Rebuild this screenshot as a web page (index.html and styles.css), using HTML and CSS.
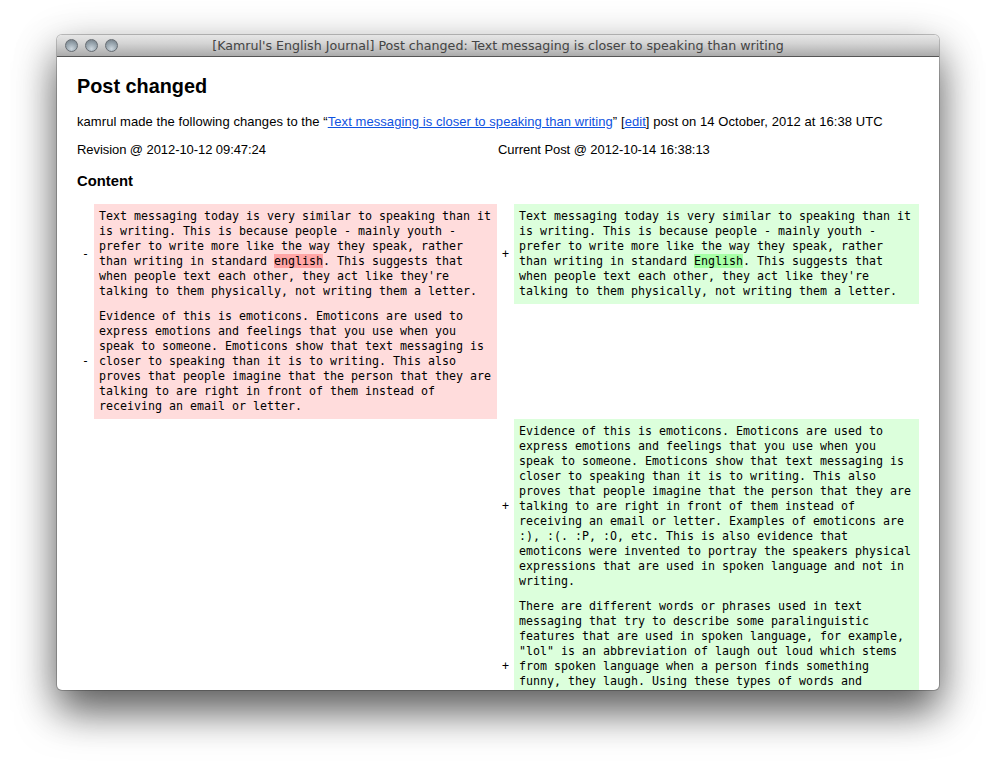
FILE: index.html
```
<!DOCTYPE html>
<html lang="en">
<head>
<meta charset="utf-8">
<title>Post changed</title>
<link rel="stylesheet" href="styles.css">
</head>
<body>
<div class="window">
  <header class="titlebar">
    <div class="lights"><span class="light"></span><span class="light"></span><span class="light"></span></div>
    <div class="title">[Kamrul's English Journal] Post changed: Text messaging is closer to speaking than writing</div>
  </header>
  <main class="content">
    <h1 class="heading">Post changed</h1>
    <p class="summary">kamrul made the following changes to the “<a href="#">Text messaging is closer to speaking than writing</a>” [<a href="#">edit</a>] post on 14 October, 2012 at 16:38 UTC</p>
    <div class="revisions"><div>Revision @ 2012-10-12 09:47:24</div><div>Current Post @ 2012-10-14 16:38:13</div></div>
    <h2 class="section">Content</h2>
    <div class="diff">
      <div class="marker">-</div>
      <div class="cell del">Text messaging today is very similar to speaking than it<br>is writing. This is because people - mainly youth -<br>prefer to write more like the way they speak, rather<br>than writing in standard <span class="hl-del">english</span>. This suggests that<br>when people text each other, they act like they're<br>talking to them physically, not writing them a letter.</div>
      <div class="marker">+</div>
      <div class="cell add">Text messaging today is very similar to speaking than it<br>is writing. This is because people - mainly youth -<br>prefer to write more like the way they speak, rather<br>than writing in standard <span class="hl-add">English</span>. This suggests that<br>when people text each other, they act like they're<br>talking to them physically, not writing them a letter.</div>

      <div class="marker">-</div>
      <div class="cell del">Evidence of this is emoticons. Emoticons are used to<br>express emotions and feelings that you use when you<br>speak to someone. Emoticons show that text messaging is<br>closer to speaking than it is to writing. This also<br>proves that people imagine that the person that they are<br>talking to are right in front of them instead of<br>receiving an email or letter.</div>
      <div class="marker"></div>
      <div class="cell"></div>

      <div class="marker"></div>
      <div class="cell"></div>
      <div class="marker">+</div>
      <div class="cell add">Evidence of this is emoticons. Emoticons are used to<br>express emotions and feelings that you use when you<br>speak to someone. Emoticons show that text messaging is<br>closer to speaking than it is to writing. This also<br>proves that people imagine that the person that they are<br>talking to are right in front of them instead of<br>receiving an email or letter. Examples of emoticons are<br>:), :(. :P, :O, etc. This is also evidence that<br>emoticons were invented to portray the speakers physical<br>expressions that are used in spoken language and not in<br>writing.</div>

      <div class="marker"></div>
      <div class="cell"></div>
      <div class="marker">+</div>
      <div class="cell add cut">There are different words or phrases used in text<br>messaging that try to describe some paralinguistic<br>features that are used in spoken language, for example,<br>"lol" is an abbreviation of laugh out loud which stems<br>from spoken language when a person finds something<br>funny, they laugh. Using these types of words and</div>
    </div>
  </main>
</div>
</body>
</html>
```
FILE: styles.css
```
html, body { margin: 0; height: 100%; background: #fff; overflow: hidden; }
body { padding: 35px 57px 0; box-sizing: border-box; width: 996px; height: 769px; }
.window {
  width: 882px; height: 655px; border-radius: 5px; overflow: hidden; background: #fff;
  box-shadow: 0 24px 40px -2px rgba(0,0,0,.5), 0 12px 44px rgba(0,0,0,.3), 0 0 0 1px rgba(0,0,0,.22);
  display: flex; flex-direction: column;
}
.titlebar {
  height: 21px; flex: none; position: relative; display: flex; align-items: center; justify-content: center;
  background: linear-gradient(#e6e6e6, #d4d4d4 40%, #ababab);
  border-bottom: 1px solid #555;
}
.lights { position: absolute; left: 8px; top: 4px; display: flex; gap: 7px; }
.light {
  width: 13px; height: 13px; box-sizing: border-box; border-radius: 50%; border: 1px solid #666c72;
  background: radial-gradient(circle at 50% 80%, #ccd6dd, #96a3ac 55%, #6f7a82);
}
.title { font: 12.65px/23px "DejaVu Sans", sans-serif; color: #444; white-space: nowrap; }
.content { padding: 0 20px; font: 13px/15px "Liberation Sans", Arial, sans-serif; color: #000; overflow: hidden; }
.heading { font-size: 19.85px; line-height: 24px; font-weight: bold; margin: 17px 0 0; }
.summary { margin: 16px 0 0; letter-spacing: .068px; }
a { color: #0f52e0; }
.revisions { display: grid; grid-template-columns: 421px 1fr; margin-top: 13px; letter-spacing: -.07px; }
.section { font-size: 14.8px; line-height: 16px; font-weight: bold; margin: 16px 0 0; }
.diff { display: grid; grid-template-columns: 17px 403px 17px 405px; margin-top: 15px; font: 11.63px/15px "DejaVu Sans Mono", monospace; }
.marker { display: flex; align-items: center; justify-content: center; }
.cell { padding: 5px; white-space: nowrap; }
.del { background: #ffdcdc; }
.add { background: #dcffdc; }
.cut { padding-bottom: 50px; }
.hl-del { background: #ffa6a6; }
.hl-add { background: #a6ffa6; }
```
